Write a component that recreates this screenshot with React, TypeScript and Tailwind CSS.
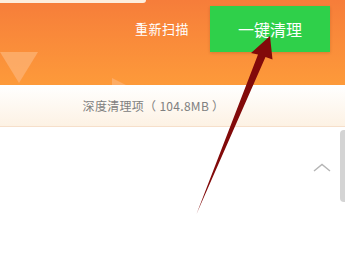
import React from "react";

const font = { fontFamily: '"Noto Sans CJK SC", "Noto Sans", sans-serif' };

// Annotation arrow drawn over the screenshot
const Arrow = () => (
    <svg className="absolute left-0 top-0 pointer-events-none" width="345" height="276" viewBox="0 0 345 276">
        <path d="M270 36 L251 53 L258 54.5 L196.5 214 L265.5 57 L272.5 59.5 Z" fill="#820a0a" />
    </svg>
);

export default function App() {
    return (
        <div className="relative w-[345px] h-[276px] overflow-hidden bg-white" style={font}>
            {/* Header */}
            <div className="relative h-[85px] bg-gradient-to-b from-[#f67d3a] to-[#fd9a3a]">
                <div className="absolute left-0 top-0 w-[146px] h-[3px] rounded-br-md bg-[#fdeedd]" />
                <div className="absolute left-0 top-[52px] w-0 h-0 border-l-[19px] border-r-[19px] border-t-[31px] border-l-transparent border-r-transparent border-t-[#fdb070]/80" />
                <div className="absolute left-[112px] top-[78px] w-0 h-0 border-r-[14px] border-b-[7px] border-r-transparent border-b-[#fdb070]/80" />
                <div className="flex items-start justify-end pt-[6px] pr-[15px]">
                    <span className="text-[13px] leading-[46px] text-white mr-[21px] tracking-[0.5px]">重新扫描</span>
                    <button className="w-[120px] h-[46px] bg-[#2fd04a] text-white text-[16px] shadow-[0_1px_3px_rgba(0,0,0,0.15)]">
                        一键清理
                    </button>
                </div>
            </div>

            {/* Section title band */}
            <div className="h-[42px] flex items-center justify-center pr-[38px] bg-gradient-to-b from-white to-[#fdf2e4] border-b border-[#f6dfca]">
                <span className="text-[12px] text-[#808080] tracking-[0.3px]">深度清理项（ 104.8MB ）</span>
            </div>

            {/* List area */}
            <div className="relative h-[150px]">
                <svg className="absolute left-[313px] top-[36px]" width="18" height="9" viewBox="0 0 18 9">
                    <path d="M1 8 L9 1.5 L17 8" fill="none" stroke="#b5b5b5" strokeWidth="1.4" />
                </svg>
                <div className="absolute right-0 top-[3px] w-[5px] h-[72px] rounded-l bg-[#d4d4d4]" />
            </div>

            <Arrow />
        </div>
    );
}
